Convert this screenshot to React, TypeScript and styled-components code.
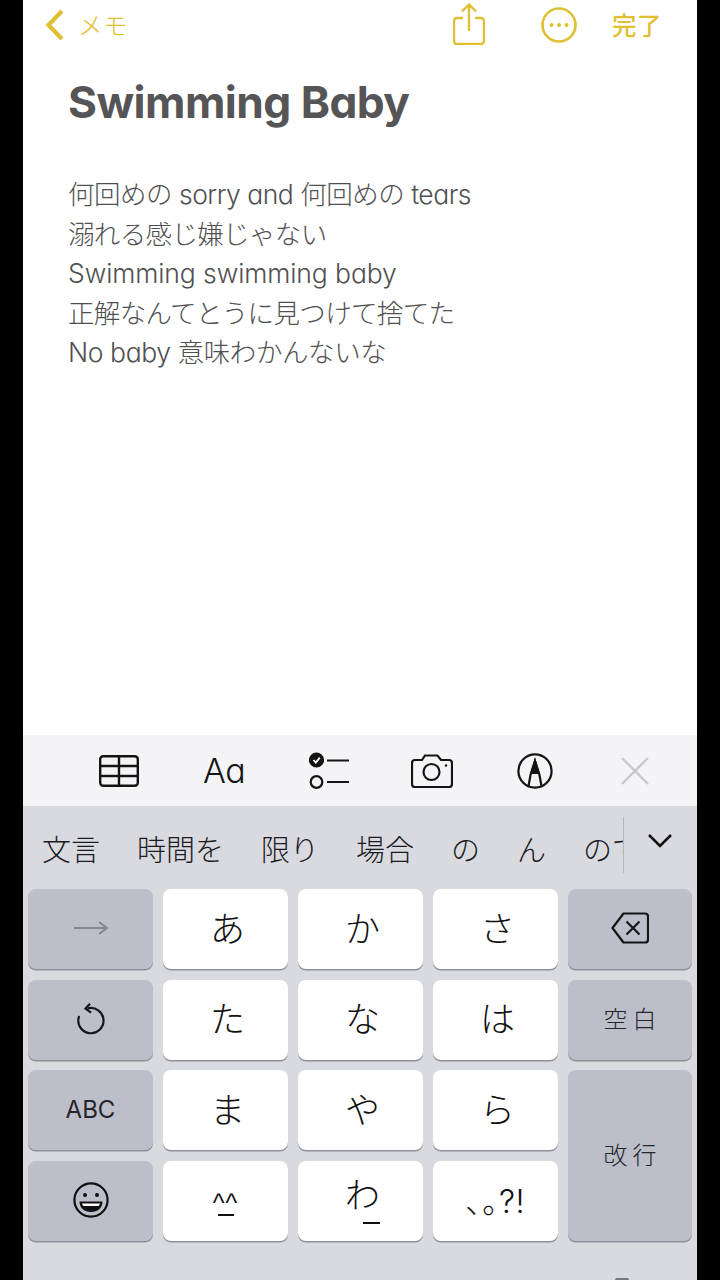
import React from 'react';
import styled, { createGlobalStyle } from 'styled-components';

const SANS = '"Inter", "Noto Sans CJK JP", sans-serif';
const YELLOW = '#dfc032';

const GlobalStyle = createGlobalStyle`
  html, body { margin: 0; padding: 0; background: #000; }
  * { box-sizing: border-box; }
`;

// ---- page frame ----

const Screen = styled.div`
  width: 720px;
  height: 1280px;
  padding: 0 23px;
  background: #000;
  font-family: ${SANS};
  font-feature-settings: "cv11";
  overflow: hidden;
`;

const Phone = styled.div`
  position: relative;
  height: 100%;
  display: flex;
  flex-direction: column;
  background: #fff;
`;

// ---- navigation bar ----

const NavBar = styled.div`
  height: 50px;
  flex: none;
  display: flex;
  align-items: center;
  padding: 0 35px 0 22px;
  color: ${YELLOW};
`;

const BackLabel = styled.span`
  margin: -2px 0 0 14px;
  font-size: 24.5px;
  font-weight: 300;
  letter-spacing: 0.5px;
`;

const NavSpacer = styled.div`
  flex: 1;
`;

const ShareIcon = styled.svg`
  margin: -2px -1px 0 0;
`;

const MoreIcon = styled.svg`
  margin-left: 57px;
`;

const DoneLabel = styled.span`
  margin: -2px 0 0 35px;
  font-size: 24.5px;
  font-weight: 500;
  letter-spacing: 0.5px;
`;

// ---- note ----

const Note = styled.div`
  flex: 1;
  padding: 24px 45px 0;
`;

const Title = styled.h1`
  margin: 0 0 45px;
  font-size: 44.3px;
  line-height: 56px;
  font-weight: 700;
  letter-spacing: -0.55px;
  color: #555557;
`;

const Lyric = styled.div<{ $tracking: number }>`
  height: 39.5px;
  font-size: 26.5px;
  line-height: 39.5px;
  font-weight: 300;
  letter-spacing: ${(p) => p.$tracking}px;
  color: #505052;
  white-space: nowrap;
`;

// ---- format toolbar ----

const Toolbar = styled.div`
  height: 71px;
  flex: none;
  display: flex;
  align-items: center;
  gap: 64px;
  padding-left: 76px;
  background: #f4f4f6;
  color: #141414;
`;

const AaLabel = styled.span`
  width: 42px;
  font-size: 34px;
  font-weight: 300;
  letter-spacing: -0.5px;
  white-space: nowrap;
`;

const ChecklistSvg = styled.svg`
  margin-right: -2px;
`;

const CloseSvg = styled.svg`
  margin-left: 3px;
`;

// ---- candidate bar ----

const CandidateBar = styled.div`
  height: 83px;
  flex: none;
  display: flex;
  align-items: center;
  background: #d9dae0;
`;

const CandidateList = styled.div`
  width: 601px;
  height: 56px;
  flex: none;
  display: flex;
  align-items: center;
  gap: 37px;
  margin-top: -5px;
  padding: 5px 0 0 19px;
  overflow: hidden;
  border-right: 1px solid #b6b7bd;
`;

const Candidate = styled.span`
  flex: none;
  font-size: 29px;
  font-weight: 300;
  color: #1c1c1e;
`;

const Collapse = styled.svg`
  margin: -14px 0 0 23px;
`;

// ---- keyboard ----

const Keyboard = styled.div`
  height: 391px;
  flex: none;
  display: grid;
  grid-template-columns: repeat(4, 125px) 124px;
  grid-template-rows: repeat(4, 80px);
  column-gap: 10px;
  row-gap: 10.5px;
  padding: 0 5px;
  background: #d9dae0;
`;

const Key = styled.div<{ $fn?: boolean; $tall?: boolean }>`
  display: flex;
  align-items: center;
  justify-content: center;
  grid-row: ${(p) => (p.$tall ? 'span 2' : 'auto')};
  padding: ${(p) => (p.$fn ? '0 0 2px' : '0 0 6px 4px')};
  border-radius: 8px;
  background: ${(p) => (p.$fn ? '#bcbec9' : '#fff')};
  box-shadow: 0 1.5px 0 #8f9098;
  color: #111;
  font-size: 35px;
  font-weight: 300;
`;

const FnLabel = styled.span`
  font-size: 24px;
  font-weight: 300;
  color: #25252a;
  letter-spacing: 5px;
  margin: -2px -5px 0 0;
`;

const AbcLabel = styled.span`
  font-size: 24px;
  font-weight: 400;
  color: #25252a;
`;

const SmallKana = styled.span`
  display: inline-flex;
  flex-direction: column;
  align-items: center;
  line-height: 36px;
  margin-top: 6px;
`;

const Underbar = styled.i`
  display: block;
  width: 17px;
  height: 2px;
  margin: 9px -18px 0 0;
  background: #111;
`;

const Kaomoji = styled.span`
  display: inline-flex;
  flex-direction: column;
  align-items: center;
  font-family: "Liberation Sans", sans-serif;
  font-size: 25px;
  line-height: 20px;
  margin: 14px 0 0 -4px;
  letter-spacing: 1px;
`;

const KaomojiMouth = styled.i`
  display: block;
  width: 16px;
  height: 2px;
  margin-top: 1px;
  background: #111;
`;

const Punct = styled.span`
  font-size: 32px;
  letter-spacing: 0.5px;
  margin: 2px 0 0 -4px;
`;

const MicTop = styled.div`
  position: absolute;
  left: 592px;
  bottom: 0;
  width: 14px;
  height: 2px;
  border-radius: 7px 7px 0 0;
  background: #75767c;
`;

const LYRICS = [
  { text: '何回めの sorry and 何回めの tears', tracking: -0.5 },
  { text: '溺れる感じ嫌じゃない', tracking: -0.65 },
  { text: 'Swimming swimming baby', tracking: -0.1 },
  { text: '正解なんてとうに見つけて捨てた', tracking: -0.65 },
  { text: 'No baby 意味わかんないな', tracking: -0.4 },
];

const CANDIDATES = ['文言', '時間を', '限り', '場合', 'の', 'ん', 'のです'];

const TableIcon = () => (
  <svg width="40" height="32" viewBox="0 0 40 32" fill="none" stroke="#141414" strokeWidth="2.4">
    <rect x="1.2" y="1.2" width="37.6" height="29.6" rx="3" />
    <path d="M1 11h38M1 21h38M20 1v30" />
  </svg>
);

const ChecklistIcon = () => (
  <ChecklistSvg width="40" height="38" viewBox="0 0 40 38" fill="none" stroke="#141414" strokeWidth="2.2">
    <circle cx="7.5" cy="8" r="6.5" fill="#141414" />
    <path d="M4.5 8l2.3 2.6 4-5" stroke="#fff" strokeWidth="1.8" />
    <circle cx="7.5" cy="30" r="5.8" />
    <path d="M18 8.5h22M18 30h22" />
  </ChecklistSvg>
);

const CameraIcon = () => (
  <svg width="42" height="34" viewBox="0 0 42 34" fill="none" stroke="#141414" strokeWidth="2.2">
    <path d="M4 6h7l3-4.5h12.5L30 6h8a3 3 0 0 1 3 3v21a3 3 0 0 1-3 3H4a3 3 0 0 1-3-3V9a3 3 0 0 1 3-3z" />
    <circle cx="20.5" cy="18" r="8" />
    <circle cx="35" cy="11.5" r="1.2" fill="#141414" stroke="none" />
  </svg>
);

const MarkupIcon = () => (
  <svg width="36" height="36" viewBox="0 0 36 36" fill="none" stroke="#141414" strokeWidth="2.2">
    <circle cx="18" cy="18" r="16.6" />
    <path d="M11.5 33l2-11L18 8l4.5 14 2 11" />
    <path d="M18 8l-3.6 12h7.2z" fill="#141414" />
  </svg>
);

const CloseIcon = () => (
  <CloseSvg width="30" height="30" viewBox="0 0 30 30" fill="none" stroke="#c8c8cb" strokeWidth="2.4">
    <path d="M2 2l26 26M28 2L2 28" />
  </CloseSvg>
);

const ArrowIcon = () => (
  <svg width="36" height="16" viewBox="0 0 36 16" fill="none" stroke="#85868e" strokeWidth="2">
    <path d="M1 8h33M26 2l8 6-8 6" />
  </svg>
);

const UndoIcon = () => (
  <svg width="30" height="32" viewBox="0 0 30 32" fill="none" stroke="#16161a" strokeWidth="2.2">
    <path d="M11.5 5.5A12.6 12.6 0 1 1 3.2 13" />
    <path d="M14 0.8L9.5 5.6l5.6 4" />
  </svg>
);

const EmojiIcon = () => (
  <svg width="36" height="36" viewBox="0 0 36 36" fill="none" stroke="#111" strokeWidth="2.2">
    <circle cx="18" cy="18" r="16.6" />
    <circle cx="12" cy="13" r="2" fill="#111" stroke="none" />
    <circle cx="24" cy="13" r="2" fill="#111" stroke="none" />
    <path d="M6.5 19.5h23c0 6.5-5 10.5-11.5 10.5S6.5 26 6.5 19.5z" fill="#111" stroke="none" />
    <path d="M9 21.5h18c-.6 1.5-1 2-1.5 2.5h-15c-.5-.5-1-1-1.5-2.5z" fill="#fff" stroke="none" />
  </svg>
);

const BackspaceIcon = () => (
  <svg width="38" height="32" viewBox="0 0 38 32" fill="none" stroke="#16161a" strokeWidth="2.2">
    <path d="M12.5 1.5H34a3 3 0 0 1 3 3v23a3 3 0 0 1-3 3H12.5L1.5 16z" strokeLinejoin="round" />
    <path d="M15.5 9.5l13 13M28.5 9.5l-13 13" />
  </svg>
);

export default function App() {
  return (
    <Screen>
      <GlobalStyle />
      <Phone>
        <NavBar>
          <svg width="19" height="32" viewBox="0 0 19 32" fill="none" stroke={YELLOW} strokeWidth="4.2">
            <path d="M17 2L3.5 16 17 30" />
          </svg>
          <BackLabel>メモ</BackLabel>
          <NavSpacer />
          <ShareIcon width="32" height="42" viewBox="0 0 32 42" fill="none" stroke={YELLOW} strokeWidth="2.4">
            <path d="M10 15H4a3 3 0 0 0-3 3v20a3 3 0 0 0 3 3h24a3 3 0 0 0 3-3V18a3 3 0 0 0-3-3h-6" />
            <path d="M16 28V2M9 8.5L16 1.5l7 7" />
          </ShareIcon>
          <MoreIcon width="36" height="36" viewBox="0 0 36 36" fill="none" stroke={YELLOW} strokeWidth="2.6">
            <circle cx="18" cy="18" r="16.5" />
            <circle cx="10.5" cy="18" r="2" fill={YELLOW} stroke="none" />
            <circle cx="18" cy="18" r="2" fill={YELLOW} stroke="none" />
            <circle cx="25.5" cy="18" r="2" fill={YELLOW} stroke="none" />
          </MoreIcon>
          <DoneLabel>完了</DoneLabel>
        </NavBar>

        <Note>
          <Title>Swimming Baby</Title>
          {LYRICS.map((line) => (
            <Lyric key={line.text} $tracking={line.tracking}>{line.text}</Lyric>
          ))}
        </Note>

        <Toolbar>
          <TableIcon />
          <AaLabel>Aa</AaLabel>
          <ChecklistIcon />
          <CameraIcon />
          <MarkupIcon />
          <CloseIcon />
        </Toolbar>

        <CandidateBar>
          <CandidateList>
            {CANDIDATES.map((c) => (
              <Candidate key={c}>{c}</Candidate>
            ))}
          </CandidateList>
          <Collapse width="26" height="16" viewBox="0 0 26 16" fill="none" stroke="#111" strokeWidth="2.6">
            <path d="M2 2l11 11L24 2" />
          </Collapse>
        </CandidateBar>

        <Keyboard>
          <Key $fn><ArrowIcon /></Key>
          <Key>あ</Key>
          <Key>か</Key>
          <Key>さ</Key>
          <Key $fn><BackspaceIcon /></Key>

          <Key $fn><UndoIcon /></Key>
          <Key>た</Key>
          <Key>な</Key>
          <Key>は</Key>
          <Key $fn><FnLabel>空白</FnLabel></Key>

          <Key $fn><AbcLabel>ABC</AbcLabel></Key>
          <Key>ま</Key>
          <Key>や</Key>
          <Key>ら</Key>
          <Key $fn $tall><FnLabel>改行</FnLabel></Key>

          <Key $fn><EmojiIcon /></Key>
          <Key><Kaomoji>^^<KaomojiMouth /></Kaomoji></Key>
          <Key><SmallKana>わ<Underbar /></SmallKana></Key>
          <Key><Punct>､｡?!</Punct></Key>
        </Keyboard>
        <MicTop />
      </Phone>
    </Screen>
  );
}
